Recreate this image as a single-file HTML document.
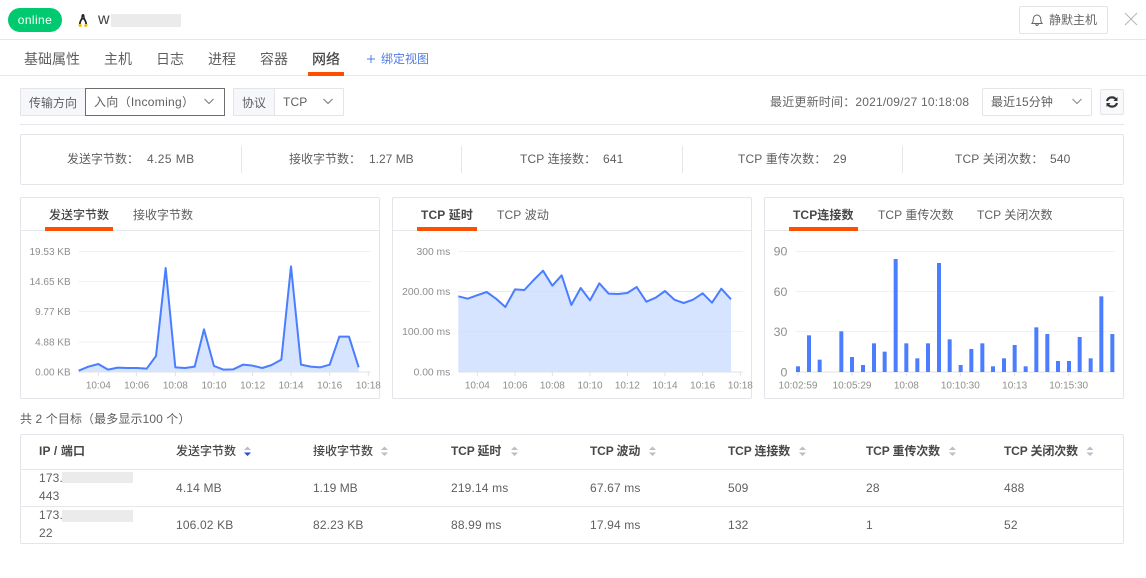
<!DOCTYPE html>
<html lang="zh"><head><meta charset="utf-8"><title>网络</title>
<style>
html,body{margin:0;padding:0;background:#fff}
#p{position:relative;width:1146px;height:578px;overflow:hidden;background:#fff;font-family:"Liberation Sans","Noto Sans CJK SC",sans-serif;font-size:12px;color:#5f5f5f}
#p div,#p span.t{position:absolute;box-sizing:border-box}
.t{white-space:nowrap;line-height:18px;letter-spacing:.15px}
.b{font-weight:700;color:#484848}
.th{letter-spacing:-.15px}
.box{border:1px solid #e3e5ea;border-radius:2px}
.l{background:#e6e7ea}
svg{position:absolute;overflow:visible}
svg text{font-family:"Liberation Sans","Noto Sans CJK SC",sans-serif;fill:#8e8e8e}
.g{stroke:#f0f1f4;stroke-width:3}
.a{stroke:#dfe1e6;stroke-width:3}
.h{fill:#bbbdc7}
</style></head><body><div id="p">
<div style="left:8px;top:8px;width:54px;height:24px;border-radius:12px;background:#00c96f;color:#fff;font-size:12px;line-height:24px;text-align:center;letter-spacing:.4px">online</div>
<svg style="left:76px;top:13px" width="14" height="15" viewBox="0 0 14 15"><path d="M7 1C5.600 1 5.400 2.600 5.400 4C5.200 6 3 8 3 11H11C11 8 8.800 6 8.600 4C8.600 2.600 8.400 1 7 1Z" fill="#222"/><path d="M7 6C5.800 7.500 4.600 9 4.800 11.500H9.200C9.400 9 8.200 7.500 7 6Z" fill="#fff"/><path d="M2 11.500L5 11L6 13.500L3.500 14ZM12 11.500L9 11L8 13.500L10.500 14ZM6.200 4.300H7.800L7 5.300Z" fill="#f5b400"/></svg>
<span class="t" style="left:98px;top:11px;font-size:16px;color:#444;letter-spacing:0">w</span>
<div style="left:111px;top:14px;width:70px;height:13px;background:#ebebeb"></div>
<div class="box" style="left:1019px;top:6px;width:89px;height:28px;border-color:#e4e5e8"></div>
<svg style="left:1030px;top:13px" width="14" height="14" viewBox="0 0 14 14" fill="none" stroke="#666" stroke-width="1"><path d="M2 10.500H12C11 9.500 10.800 8.500 10.800 6.500C10.800 4 9.200 2 7 2C4.800 2 3.200 4 3.200 6.500C3.200 8.500 3 9.500 2 10.500ZM5.700 10.800C5.800 12 6.300 12.500 7 12.500C7.700 12.500 8.200 12 8.300 10.800"/></svg>
<span class="t" style="left:1049px;top:11px;letter-spacing:0;color:#666">静默主机</span>
<svg style="left:1124px;top:12px" width="14" height="14" fill="none" stroke="#b5b5b5" stroke-width="1"><path d="M1 1L13 13M13 1L1 13"/></svg>
<div class="l" style="left:0;top:39px;width:1146px;height:1px"></div>
<div class="l" style="left:0;top:75px;width:1146px;height:1px"></div>

<span class="t" style="left:24px;top:50px;font-size:14px;letter-spacing:0">基础属性</span>
<span class="t" style="left:104px;top:50px;font-size:14px;letter-spacing:0">主机</span>
<span class="t" style="left:156px;top:50px;font-size:14px;letter-spacing:0">日志</span>
<span class="t" style="left:208px;top:50px;font-size:14px;letter-spacing:0">进程</span>
<span class="t" style="left:260px;top:50px;font-size:14px;letter-spacing:0">容器</span>
<span class="t b" style="left:312px;top:50px;font-size:14px;letter-spacing:0;font-weight:500">网络</span>
<div style="left:308px;top:72px;width:36px;height:4px;background:#ff4f00"></div>
<svg style="left:366px;top:54px" width="10" height="10" stroke="#4f7be8" stroke-width="1"><path d="M1 5H9M5 1V9"/></svg>
<span class="t" style="left:381px;top:50px;letter-spacing:0;color:#4f7be8">绑定视图</span>

<div style="left:20px;top:88px;width:66px;height:28px;background:#f6f7fa;border:1px solid #e3e5ea;border-right:0"></div>
<span class="t" style="left:29px;top:94px;letter-spacing:0">传输方向</span>
<div style="left:85px;top:88px;width:140px;height:28px;border:1px solid #6e6e6e"></div>
<span class="t" style="left:94px;top:93px;letter-spacing:.3px">入向（Incoming）</span>
<svg style="left:203px;top:98px" width="12" height="8" fill="none" stroke="#777" stroke-width="1"><path d="M1.500 1L6 5.500L10.500 1"/></svg>
<div style="left:233px;top:88px;width:42px;height:28px;background:#f6f7fa;border:1px solid #e3e5ea"></div>
<span class="t" style="left:242px;top:94px;letter-spacing:0">协议</span>
<div style="left:274px;top:88px;width:70px;height:28px;border:1px solid #e3e5ea;border-left:0"></div>
<span class="t" style="left:283px;top:93px">TCP</span>
<svg style="left:322px;top:98px" width="12" height="8" fill="none" stroke="#777" stroke-width="1"><path d="M1.500 1L6 5.500L10.500 1"/></svg>

<span class="t" style="left:770px;top:93px;letter-spacing:.2px;color:#666">最近更新时间：2021/09/27 10:18:08</span>
<div class="box" style="left:982px;top:88px;width:110px;height:28px"></div>
<span class="t" style="left:991px;top:93px;letter-spacing:.1px">最近15分钟</span>
<svg style="left:1071px;top:98px" width="12" height="8" fill="none" stroke="#888" stroke-width="1"><path d="M1.500 1L6 5.500L10.500 1"/></svg>
<div class="box" style="left:1100px;top:89px;width:24px;height:26px;background:#f8f9fb"></div>
<svg style="left:1105px;top:95px" width="14" height="14" viewBox="0 0 14 14" fill="none" stroke="#333" stroke-width="2.200"><path d="M2 6C2.600 3.600 4.600 2.400 7 2.400C8.800 2.400 10.200 3.300 11 4.500"/><path d="M12 8C11.400 10.400 9.400 11.600 7 11.600C5.200 11.600 3.800 10.700 3 9.500"/><path d="M12.500 2V6H8.500ZM1.500 12V8H5.500Z" fill="#333" stroke="none"/></svg>
<div class="l" style="left:20px;top:124px;width:1104px;height:1px"></div>

<div class="box" style="left:20px;top:134px;width:1104px;height:51px"></div>
<div class="l" style="left:241px;top:146px;width:1px;height:27px"></div>
<div class="l" style="left:461px;top:146px;width:1px;height:27px"></div>
<div class="l" style="left:682px;top:146px;width:1px;height:27px"></div>
<div class="l" style="left:902px;top:146px;width:1px;height:27px"></div>
<span class="t" style="left:67px;top:150px;letter-spacing:0">发送字节数：</span><span class="t" style="left:147px;top:150px;letter-spacing:.4px">4.25 MB</span>
<span class="t" style="left:289px;top:150px;letter-spacing:0">接收字节数：</span><span class="t" style="left:369px;top:150px;letter-spacing:0">1.27 MB</span>
<span class="t" style="left:520px;top:150px">TCP 连接数：</span><span class="t" style="left:603px;top:150px">641</span>
<span class="t" style="left:738px;top:150px">TCP 重传次数：</span><span class="t" style="left:833px;top:150px">29</span>
<span class="t" style="left:955px;top:150px">TCP 关闭次数：</span><span class="t" style="left:1050px;top:150px">540</span>

<!-- Chart 1 -->
<div class="box" style="left:20px;top:197px;width:360px;height:202px"></div>
<div class="l" style="left:21px;top:230px;width:358px;height:1px"></div>
<span class="t b" style="left:49px;top:206px;letter-spacing:0;font-weight:500">发送字节数</span>
<span class="t" style="left:133px;top:206px;letter-spacing:0">接收字节数</span>
<div style="left:45px;top:227px;width:68px;height:4px;background:#ff4f00"></div>
<svg style="left:20px;top:195px" width="365" height="205" viewBox="0 0 1095 615">
<g class="g"><path d="M176 169H1053M176 259H1053M176 349H1053M176 441H1053"/></g>
<path class="a" d="M176 531H1053M235 531V543M349 531V543M466 531V543M582 531V543M698 531V543M813 531V543M929 531V543M1045 531V543" fill="none"/>
<path fill="#d6e4ff" d="M176 531L176 527L205 515L235 507L264 524L293 518L322 519L351 519L380 521L408 483L437 219L466 517L495 519L524 515L552 403L582 513L611 524L640 523L669 509L698 512L727 519L755 510L784 494L813 214L843 509L872 515L901 517L929 509L958 425L987 425L1016 517V531Z"/>
<path fill="none" stroke="#4a7dff" stroke-width="6" stroke-linejoin="round" d="M176 527L205 515L235 507L264 524L293 518L322 519L351 519L380 521L408 483L437 219L466 517L495 519L524 515L552 403L582 513L611 524L640 523L669 509L698 512L727 519L755 510L784 494L813 214L843 509L872 515L901 517L929 509L958 425L987 425L1016 517"/>
<g font-size="30" text-anchor="end"><text x="152" y="180">19.53 KB</text><text x="152" y="270">14.65 KB</text><text x="152" y="360">9.77 KB</text><text x="152" y="451">4.88 KB</text><text x="152" y="542">0.00 KB</text></g>
<g font-size="30" text-anchor="middle"><text x="235" y="581">10:04</text><text x="350" y="581">10:06</text><text x="466" y="581">10:08</text><text x="582" y="581">10:10</text><text x="698" y="581">10:12</text><text x="813" y="581">10:14</text><text x="929" y="581">10:16</text><text x="1045" y="581">10:18</text></g>
</svg>

<!-- Chart 2 -->
<div class="box" style="left:392px;top:197px;width:360px;height:202px"></div>
<div class="l" style="left:393px;top:230px;width:358px;height:1px"></div>
<span class="t b" style="left:421px;top:206px">TCP 延时</span>
<span class="t" style="left:497px;top:206px">TCP 波动</span>
<div style="left:417px;top:227px;width:60px;height:4px;background:#ff4f00"></div>
<svg style="left:390px;top:195px" width="365" height="205" viewBox="0 0 1095 615">
<g class="g"><path d="M205 169H1059M205 289H1059M205 409H1059"/></g>
<path fill="#d6e4ff" d="M205 531V304L233 311L261 301L290 291L318 311L346 336L375 283L403 285L431 255L459 227L487 272L515 241L544 330L572 279L600 316L628 265L656 296L684 297L712 294L740 276L769 320L797 308L825 288L853 314L881 324L909 314L938 295L966 323L994 281L1023 313V531Z"/>
<path d="M205 409H1023M205 289H1023" stroke="#c9d8f8" stroke-width="2" opacity=".5"/>
<path class="a" d="M205 531H1059M262 531V543M375 531V543M487 531V543M600 531V543M712 531V543M825 531V543M938 531V543M1051 531V543" fill="none"/>
<path fill="none" stroke="#4a7dff" stroke-width="6" stroke-linejoin="round" d="M205 304L233 311L261 301L290 291L318 311L346 336L375 283L403 285L431 255L459 227L487 272L515 241L544 330L572 279L600 316L628 265L656 296L684 297L712 294L740 276L769 320L797 308L825 288L853 314L881 324L909 314L938 295L966 323L994 281L1023 313"/>
<g font-size="31" text-anchor="end"><text x="181" y="180">300 ms</text><text x="181" y="300">200.00 ms</text><text x="181" y="420">100.00 ms</text><text x="181" y="542">0.00 ms</text></g>
<g font-size="30" text-anchor="middle"><text x="262" y="581">10:04</text><text x="375" y="581">10:06</text><text x="487" y="581">10:08</text><text x="600" y="581">10:10</text><text x="712" y="581">10:12</text><text x="825" y="581">10:14</text><text x="938" y="581">10:16</text><text x="1051" y="581">10:18</text></g>
</svg>

<!-- Chart 3 -->
<div class="box" style="left:764px;top:197px;width:360px;height:202px"></div>
<div class="l" style="left:765px;top:230px;width:358px;height:1px"></div>
<span class="t b" style="left:793px;top:206px;letter-spacing:.1px">TCP连接数</span>
<span class="t" style="left:878px;top:206px;letter-spacing:.05px">TCP 重传次数</span>
<span class="t" style="left:977px;top:206px;letter-spacing:.05px">TCP 关闭次数</span>
<div style="left:789px;top:227px;width:69px;height:4px;background:#ff4f00"></div>
<svg style="left:762px;top:195px" width="365" height="205" viewBox="0 0 1095 615">
<g class="g"><path d="M100 169H1059M100 289H1059M100 409H1059"/></g>
<path class="a" d="M100 531H1059M108 531V543M270 531V543M433 531V543M595 531V543M758 531V543M920 531V543" fill="none"/>
<g fill="#4a7dff"><rect x="102" y="514" width="12" height="17"/><rect x="135" y="421" width="12" height="110"/><rect x="167" y="494" width="12" height="37"/><rect x="232" y="409" width="12" height="122"/><rect x="264" y="486" width="12" height="45"/><rect x="297" y="510" width="12" height="21"/><rect x="330" y="445" width="12" height="86"/><rect x="362" y="470" width="12" height="61"/><rect x="395" y="192" width="12" height="339"/><rect x="427" y="445" width="12" height="86"/><rect x="460" y="490" width="12" height="41"/><rect x="492" y="445" width="12" height="86"/><rect x="525" y="204" width="12" height="327"/><rect x="557" y="433" width="12" height="98"/><rect x="590" y="510" width="12" height="21"/><rect x="622" y="462" width="12" height="69"/><rect x="655" y="445" width="12" height="86"/><rect x="687" y="514" width="12" height="17"/><rect x="720" y="490" width="12" height="41"/><rect x="752" y="450" width="12" height="81"/><rect x="785" y="514" width="12" height="17"/><rect x="817" y="397" width="12" height="134"/><rect x="850" y="417" width="12" height="114"/><rect x="882" y="498" width="12" height="33"/><rect x="915" y="498" width="12" height="33"/><rect x="947" y="426" width="12" height="105"/><rect x="980" y="490" width="12" height="41"/><rect x="1012" y="304" width="12" height="227"/><rect x="1045" y="417" width="12" height="114"/></g>
<g font-size="37" text-anchor="end"><text x="76" y="181">90</text><text x="76" y="303">60</text><text x="76" y="423">30</text><text x="76" y="544">0</text></g>
<g font-size="30" text-anchor="middle"><text x="108" y="581">10:02:59</text><text x="270" y="581">10:05:29</text><text x="433" y="581">10:08</text><text x="595" y="581">10:10:30</text><text x="758" y="581">10:13</text><text x="920" y="581">10:15:30</text></g>
</svg>

<span class="t" style="left:20px;top:410px;letter-spacing:.1px">共 2 个目标（最多显示100 个）</span>

<!-- Table -->
<div class="box" style="left:20px;top:434px;width:1104px;height:110px"></div>
<div class="l" style="left:21px;top:469px;width:1102px;height:1px"></div>
<div class="l" style="left:21px;top:506px;width:1102px;height:1px"></div>
<span class="t b" style="left:39px;top:442px">IP / 端口</span>
<span class="t b" style="left:176px;top:442px;letter-spacing:0;font-weight:500">发送字节数</span>
<span class="t b" style="left:313px;top:442px;letter-spacing:0;font-weight:500">接收字节数</span>
<span class="t b th" style="left:451px;top:442px">TCP 延时</span>
<span class="t b th" style="left:590px;top:442px">TCP 波动</span>
<span class="t b th" style="left:728px;top:442px">TCP 连接数</span>
<span class="t b th" style="left:866px;top:442px">TCP 重传次数</span>
<span class="t b th" style="left:1004px;top:442px">TCP 关闭次数</span>
<svg style="left:0;top:0" width="1146" height="578">
<g class="h"><path d="M244 450L247.500 446.500L251 450ZM244 452.500L247.500 456L251 452.500Z"/><path d="M381 450L384.500 446.500L388 450ZM381 452.500L384.500 456L388 452.500Z"/><path d="M511 450L514.500 446.500L518 450ZM511 452.500L514.500 456L518 452.500Z"/><path d="M649 450L652.500 446.500L656 450ZM649 452.500L652.500 456L656 452.500Z"/><path d="M799 450L802.500 446.500L806 450ZM799 452.500L802.500 456L806 452.500Z"/><path d="M949 450L952.500 446.500L956 450ZM949 452.500L952.500 456L956 452.500Z"/><path d="M1086.500 450L1090 446.500L1093.500 450ZM1086.500 452.500L1090 456L1093.500 452.500Z"/></g>
<path d="M244 452.500L247.500 456L251 452.500Z" fill="#2f4fd0"/>
</svg>
<span class="t" style="left:39px;top:469px">173.</span><div style="left:62px;top:472px;width:71px;height:11px;background:#ebebeb"></div>
<span class="t" style="left:39px;top:487px">443</span>
<span class="t" style="left:39px;top:506px">173.</span><div style="left:62px;top:510px;width:71px;height:12px;background:#ebebeb"></div>
<span class="t" style="left:39px;top:524px">22</span>
<span class="t" style="left:176px;top:479px">4.14 MB</span><span class="t" style="left:313px;top:479px;letter-spacing:0">1.19 MB</span><span class="t" style="left:451px;top:479px">219.14 ms</span><span class="t" style="left:590px;top:479px">67.67 ms</span><span class="t" style="left:728px;top:479px">509</span><span class="t" style="left:866px;top:479px">28</span><span class="t" style="left:1004px;top:479px">488</span>
<span class="t" style="left:176px;top:516px">106.02 KB</span><span class="t" style="left:313px;top:516px">82.23 KB</span><span class="t" style="left:451px;top:516px">88.99 ms</span><span class="t" style="left:590px;top:516px">17.94 ms</span><span class="t" style="left:728px;top:516px">132</span><span class="t" style="left:866px;top:516px">1</span><span class="t" style="left:1004px;top:516px">52</span>
</div></body></html>
